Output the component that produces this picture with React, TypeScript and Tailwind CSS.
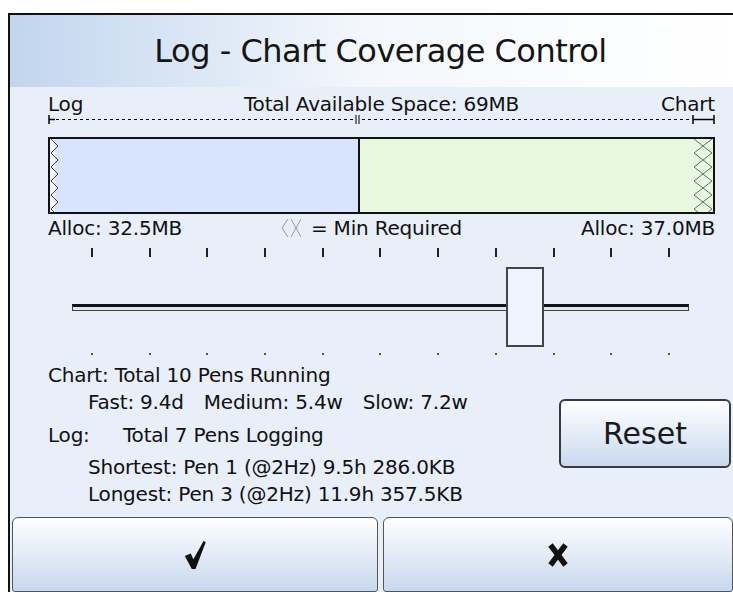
import React from "react"

const TICK_COUNT = 11

function LeftZigzag() {
    // chevrons down the left edge of the log area
    const pts: string[] = []
    for (let y = 0, i = 0; y <= 77; y += 7, i++) pts.push(`${i % 2 === 0 ? 1 : 8},${y}`)
    return (
        <svg width="10" height="73" viewBox="0 0 10 73" className="shrink-0">
            <rect x="0" y="0" width="5" height="73" fill="#f2f6fc" />
            <polyline points={pts.join(" ")} fill="none" stroke="#444" strokeWidth="1" />
        </svg>
    )
}

function RightCrosses() {
    const a: string[] = []
    const b: string[] = []
    for (let y = 0, i = 0; y <= 77; y += 7, i++) {
        a.push(`${i % 2 === 0 ? 1 : 10},${y}`)
        b.push(`${i % 2 === 0 ? 19 : 10},${y}`)
    }
    return (
        <svg width="20" height="73" viewBox="0 0 20 73" className="shrink-0">
            <polyline points={a.join(" ")} fill="none" stroke="#6a6a6a" strokeWidth="1" />
            <polyline points={b.join(" ")} fill="none" stroke="#6a6a6a" strokeWidth="1" />
        </svg>
    )
}

function ScaleLine() {
    return (
        <svg width="667" height="9" viewBox="0 0 667 9" className="block">
            {/* log start marker */}
            <line x1="1" y1="0" x2="1" y2="9" stroke="#000" strokeWidth="1.5" />
            <line x1="1" y1="4.5" x2="7" y2="4.5" stroke="#000" strokeWidth="1.5" />
            <line x1="8" y1="4.5" x2="306" y2="4.5" stroke="#000" strokeWidth="1" strokeDasharray="3 3" />
            {/* split marker */}
            <line x1="308" y1="0" x2="308" y2="9" stroke="#000" strokeWidth="1" />
            <line x1="311" y1="0" x2="311" y2="9" stroke="#000" strokeWidth="1" />
            <line x1="314" y1="4.5" x2="642" y2="4.5" stroke="#000" strokeWidth="1" strokeDasharray="3 3" />
            {/* chart end marker */}
            <line x1="645" y1="0" x2="645" y2="9" stroke="#000" strokeWidth="1.5" />
            <line x1="645" y1="4.5" x2="666" y2="4.5" stroke="#000" strokeWidth="1.5" />
            <line x1="666" y1="0" x2="666" y2="9" stroke="#000" strokeWidth="1.5" />
        </svg>
    )
}

function MinIcon() {
    return (
        <svg width="22" height="20" viewBox="0 0 22 20" className="inline-block mr-[8px]">
            <polyline points="7,1 1,10 7,19" fill="none" stroke="#999" strokeWidth="1" />
            <line x1="10" y1="1" x2="20" y2="19" stroke="#999" strokeWidth="1" />
            <line x1="20" y1="1" x2="10" y2="19" stroke="#999" strokeWidth="1" />
        </svg>
    )
}

export default function App() {
    const ticks = Array.from({ length: TICK_COUNT })

    return (
        <div
            className="w-[733px] h-[592px] bg-white overflow-hidden text-[#111]"
            style={{ fontFamily: "'DejaVu Sans', 'Noto Sans', sans-serif" }}
        >
            <div className="mt-[13px] ml-[8px] h-[579px] border-l-2 border-t-2 border-[#111] flex flex-col bg-[#e9eff9]">
                {/* Title */}
                <div className="h-[72px] shrink-0 flex items-center justify-center bg-gradient-to-r from-[#c2d5ee] via-[#f4f8fc] to-white">
                    <h1 className="text-[32px] tracking-[-0.5px] text-[#151515] translate-x-[9px]">Log - Chart Coverage Control</h1>
                </div>

                {/* Body */}
                <div className="flex-1 flex flex-col pl-[38px] pr-[18px] text-[20px] leading-[22px] tracking-[-0.2px]">
                    <div className="mt-[6px] w-[667px] grid grid-cols-[1fr_auto_1fr] items-center">
                        <span>Log</span>
                        <span>Total Available Space: 69MB</span>
                        <span className="text-right">Chart</span>
                    </div>
                    <div>
                        <ScaleLine />
                    </div>

                    {/* Allocation bar */}
                    <div className="mt-[13px] w-[667px] h-[77px] border-2 border-[#111] flex">
                        <div className="w-[310px] h-full bg-[#d7e4fb] border-r-2 border-[#111] flex">
                            <LeftZigzag />
                        </div>
                        <div className="flex-1 h-full bg-[#e6f8df] flex justify-end">
                            <RightCrosses />
                        </div>
                    </div>

                    <div className="mt-[3px] w-[667px] grid grid-cols-[1fr_auto_1fr] items-center">
                        <span>Alloc: 32.5MB</span>
                        <span className="flex items-center -translate-x-[10px]">
                            <MinIcon />= Min Required
                        </span>
                        <span className="text-right">Alloc: 37.0MB</span>
                    </div>

                    {/* Slider */}
                    <div className="ml-[24px] w-[617px] flex flex-col">
                        <div className="mt-[9px] flex justify-between px-[19px]">
                            {ticks.map((_, i) => (
                                <div key={i} className="w-[2px] h-[9px] bg-[#222]" />
                            ))}
                        </div>
                        <div className="relative h-[80px] mt-[10px] flex items-center">
                            <div className="w-full h-[7px] bg-[#dde6f3] border border-[#444] border-t-[3px] border-t-[#111]" />
                            <div className="absolute left-[434px] top-0 w-[38px] h-[80px] border-2 border-[#444] bg-[#eef4fd]" />
                        </div>
                        <div className="mt-[6px] flex justify-between px-[19px]">
                            {ticks.map((_, i) => (
                                <div key={i} className="w-[2px] h-[2px] bg-[#555]" />
                            ))}
                        </div>
                    </div>

                    {/* Info + reset */}
                    <div className="mt-[7px] flex">
                        <div className="flex-1 flex flex-col">
                            <div className="leading-[27px]">Chart: Total 10 Pens Running</div>
                            <div className="pl-[40px] leading-[27px] flex gap-[20px]">
                                <span>Fast: 9.4d</span>
                                <span>Medium: 5.4w</span>
                                <span>Slow: 7.2w</span>
                            </div>
                            <div className="mt-[6px] leading-[27px] flex">
                                <span className="w-[75px]">Log:</span>
                                <span>Total 7 Pens Logging</span>
                            </div>
                            <div className="pl-[40px] mt-[5px] leading-[27px]">Shortest: Pen 1 (@2Hz) 9.5h 286.0KB</div>
                            <div className="pl-[40px] leading-[27px]">Longest: Pen 3 (@2Hz) 11.9h 357.5KB</div>
                        </div>
                        <div className="pt-[37px] -mr-[16px]">
                            <button className="w-[172px] h-[69px] rounded-[6px] border-2 border-[#3a3a3a] bg-gradient-to-b from-white to-[#c9d9ef] text-[30px] tracking-normal text-[#1a1a1a]">
                                Reset
                            </button>
                        </div>
                    </div>
                </div>

                {/* Footer buttons */}
                <div className="h-[75px] shrink-0 flex gap-[5px] pl-[2px]">
                    <button className="w-[366px] h-full rounded-t-[6px] rounded-b-[3px] border border-[#555] bg-gradient-to-b from-white to-[#c7d8ee] flex items-center justify-center">
                        <svg width="24" height="30" viewBox="0 0 22 28">
                            <path d="M1.5 15 L7 12.5 L9.5 18 L19 1 L21 2 L11.5 27 L8 27 Z" fill="#111" />
                        </svg>
                    </button>
                    <button className="flex-1 h-full rounded-t-[6px] rounded-b-[3px] border border-[#555] bg-gradient-to-b from-white to-[#c7d8ee] flex items-center justify-center">
                        <svg width="22" height="26" viewBox="0 0 22 26">
                            <line x1="3.5" y1="3" x2="18.5" y2="23" stroke="#111" strokeWidth="5.5" />
                            <line x1="18.5" y1="3" x2="3.5" y2="23" stroke="#111" strokeWidth="5.5" />
                        </svg>
                    </button>
                </div>
            </div>
        </div>
    )
}
